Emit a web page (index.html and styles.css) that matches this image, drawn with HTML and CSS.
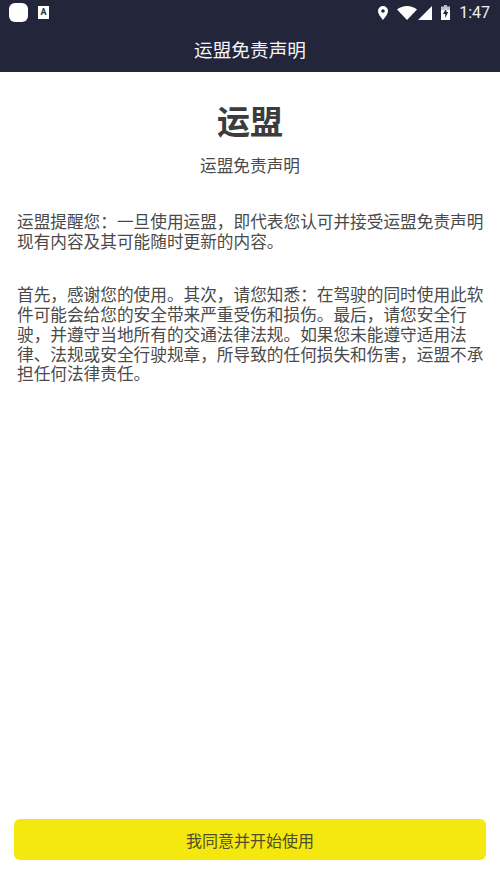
FILE: index.html
```html
<!DOCTYPE html>
<html lang="zh-CN">
<head>
<meta charset="utf-8">
<title>运盟免责声明</title>
<link rel="stylesheet" href="styles.css">
</head>
<body>
<div class="app">
  <header class="header">
    <div class="statusbar">
      <div class="status-left">
        <span class="app-blob"></span>
        <span class="app-a">A</span>
      </div>
      <div class="status-right">
        <svg class="ic-loc" viewBox="0 0 12 16" width="12" height="16"><path fill="#fff" fill-rule="evenodd" d="M6 1a5 5 0 0 0-5 5c0 3.600 5 9 5 9s5-5.400 5-9a5 5 0 0 0-5-5zm0 6.800A1.800 1.800 0 1 1 6 4.200a1.800 1.800 0 0 1 0 3.600z"/></svg>
        <svg class="ic-wifi" viewBox="0 0 20 14" width="20" height="14"><path fill="#fff" d="M0 3.500C2.800 1.300 6.200 0 10 0s7.200 1.300 10 3.500L10 14z"/></svg>
        <svg class="ic-signal" viewBox="0 0 14 14" width="14" height="14"><path fill="#fff" d="M14 0v14H0z"/></svg>
        <svg class="ic-batt" viewBox="0 0 9 15" width="9" height="15"><path fill="#fff" opacity=".7" d="M3 0h3v1.500h3V5H0V1.500h3z"/><path fill="#fff" fill-rule="evenodd" d="M0 5h9v10H0zM5.400 3 2 9h2.200v4L7.200 7H5.400z"/></svg>
        <span class="clock">1:47</span>
      </div>
    </div>
    <div class="titlebar">运盟免责声明</div>
  </header>
  <main class="content">
    <h1 class="brand">运盟</h1>
    <p class="subtitle">运盟免责声明</p>
    <p class="para para-first">运盟提醒您：一旦使用运盟，即代表您认可并接受运盟免责声明现有内容及其可能随时更新的内容。</p>
    <p class="para para-second">首先，感谢您的使用。其次，请您知悉：在驾驶的同时使用此软件可能会给您的安全带来严重受伤和损伤。最后，请您安全行驶，并遵守当地所有的交通法律法规。如果您未能遵守适用法律、法规或安全行驶规章，所导致的任何损失和伤害，运盟不承担任何法律责任。</p>
  </main>
  <footer class="footer">
    <button class="agree" type="button">我同意并开始使用</button>
  </footer>
</div>
</body>
</html>
```
FILE: styles.css
```css
* { box-sizing: border-box; }
html, body { margin: 0; padding: 0; }
body {
  width: 500px;
  height: 888px;
  overflow: hidden;
  background: #fff;
  font-family: "Noto Sans CJK SC", "Roboto", sans-serif;
}
.app { display: flex; flex-direction: column; height: 888px; }
.header { background: #23253b; color: #fff; height: 72px; flex: none; }
.statusbar {
  height: 25px;
  display: flex;
  justify-content: space-between;
  align-items: center;
  padding: 0 10px 0 9px;
}
.status-left { display: flex; align-items: center; gap: 10px; }
.app-blob { width: 19px; height: 19px; border-radius: 6px; background: #fff; }
.app-a {
  width: 11px; height: 13px; background: #fff; color: #2c2e42;
  font: 700 9px/12px "Roboto", sans-serif; text-align: center;
}
.status-right { display: flex; align-items: center; }
.ic-loc { margin-right: 8px; }
.ic-wifi { margin-right: 1px; }
.ic-signal { margin-right: 9px; }
.ic-batt { margin-right: 9px; }
.clock { font: 400 16px/20px "Roboto", sans-serif; color: #f0f0f3; }
.titlebar {
  height: 47px;
  display: flex; align-items: center; justify-content: center;
  font-size: 18.67px;
  padding-bottom: 1px;
  color: #f4f4f6;
}
.content { flex: 1; color: #4a4a4a; }
.brand {
  margin: 23px 0 0;
  text-align: center;
  font-size: 33px;
  line-height: 50px;
  font-weight: 700;
  color: #3c3c3c;
}
.subtitle { margin: 9px 0 0; text-align: center; font-size: 16.67px; line-height: 22px; }
.para { margin: 0; padding: 0 15px 0 17px; font-size: 16.67px; line-height: 19.7px; }
.para-first { margin-top: 36px; }
.para-second { margin-top: 34px; }
.footer { flex: none; padding: 0 14px 28px; }
.agree {
  display: block; width: 100%; height: 41px;
  border: 0; border-radius: 6px;
  background: #f4e80e; color: #4f4f2c;
  font-family: inherit; font-size: 16px;
}
```
